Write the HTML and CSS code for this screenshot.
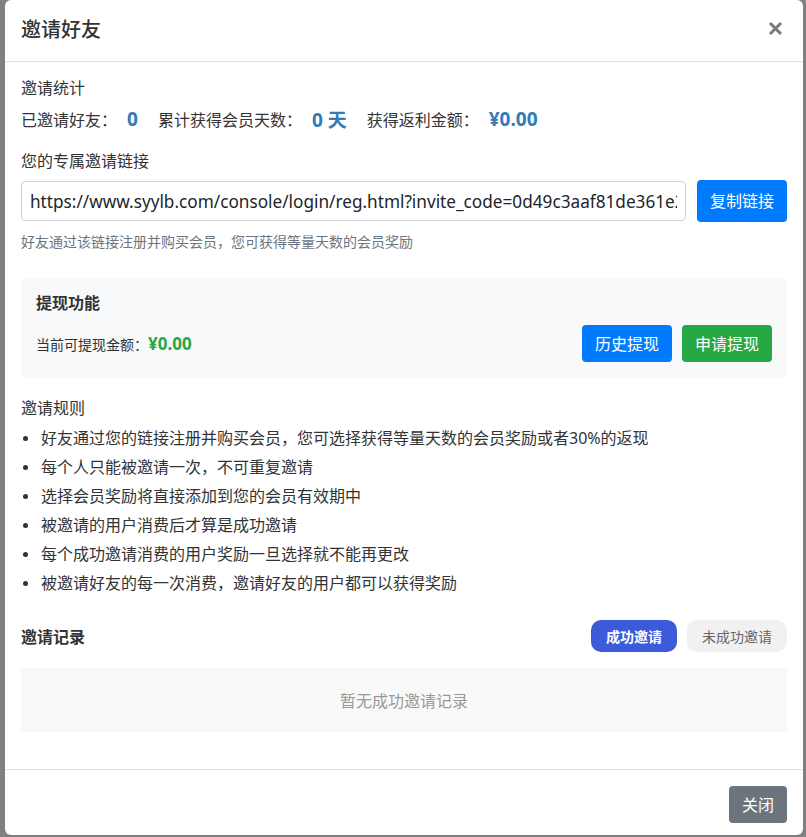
FILE: index.html
```html
<!DOCTYPE html>
<html lang="zh-CN">
<head>
<meta charset="utf-8">
<title>邀请好友</title>
<link rel="stylesheet" href="styles.css">
</head>
<body>
<div class="backdrop">
  <div class="modal">
    <div class="modal-header">
      <h5 class="modal-title">邀请好友</h5>
      <button class="close" type="button" aria-label="关闭">
        <svg width="15" height="15" viewBox="0 0 15 15"><path d="M2 2 L13 13 M13 2 L2 13" stroke="#7a7a7a" stroke-width="3" stroke-linecap="butt"/></svg>
      </button>
    </div>
    <div class="modal-body">
      <div class="sec-title">邀请统计</div>
      <div class="stat-row">
        <span class="stat"><span class="stat-label">已邀请好友：</span><strong class="stat-num">0</strong></span>
        <span class="stat"><span class="stat-label">累计获得会员天数：</span><strong class="stat-num">0 天</strong></span>
        <span class="stat"><span class="stat-label">获得返利金额：</span><strong class="stat-num">¥0.00</strong></span>
      </div>

      <div class="sec-title link-title">您的专属邀请链接</div>
      <div class="link-row">
        <input class="link-input" type="text" readonly value="https://www.syylb.com/console/login/reg.html?invite_code=0d49c3aaf81de361e2b7a9">
        <button class="btn btn-primary btn-copy" type="button">复制链接</button>
      </div>
      <div class="hint">好友通过该链接注册并购买会员，您可获得等量天数的会员奖励</div>

      <div class="withdraw">
        <div class="withdraw-title">提现功能</div>
        <div class="withdraw-row">
          <div class="withdraw-amount">当前可提现金额：<strong class="green-num">¥0.00</strong></div>
          <div class="withdraw-actions">
            <button class="btn btn-primary" type="button">历史提现</button>
            <button class="btn btn-success" type="button">申请提现</button>
          </div>
        </div>
      </div>

      <div class="sec-title rules-title">邀请规则</div>
      <ul class="rules">
        <li>好友通过您的链接注册并购买会员，您可选择获得等量天数的会员奖励或者30%的返现</li>
        <li>每个人只能被邀请一次，不可重复邀请</li>
        <li>选择会员奖励将直接添加到您的会员有效期中</li>
        <li>被邀请的用户消费后才算是成功邀请</li>
        <li>每个成功邀请消费的用户奖励一旦选择就不能再更改</li>
        <li>被邀请好友的每一次消费，邀请好友的用户都可以获得奖励</li>
      </ul>

      <div class="records-head">
        <div class="records-title">邀请记录</div>
        <div class="tabs">
          <button class="tab tab-active" type="button">成功邀请</button>
          <button class="tab" type="button">未成功邀请</button>
        </div>
      </div>
      <div class="empty">暂无成功邀请记录</div>
    </div>
    <div class="modal-footer">
      <button class="btn btn-secondary" type="button">关闭</button>
    </div>
  </div>
</div>
</body>
</html>
```

FILE: styles.css
```css
* { box-sizing: border-box; }

html, body {
  margin: 0;
  padding: 0;
  height: 837px;
  overflow: hidden;
}

body {
  background: #808080;
  font-family: "Noto Sans", "Noto Sans CJK SC", sans-serif;
  font-size: 16px;
  color: #212529;
}

.backdrop {
  height: 837px;
  padding-left: 5px;
}

.modal {
  width: 798px;
  height: 835px;
  background: #fff;
  border-radius: 6px;
  display: flex;
  flex-direction: column;
}

.modal-header {
  height: 62px;
  border-bottom: 1px solid #dee2e6;
  padding: 0 20px 1px 16px;
  display: flex;
  align-items: center;
  justify-content: space-between;
}

.modal-title {
  margin: 0;
  font-size: 20px;
  font-weight: 500;
  line-height: 24px;
  color: #333;
}

.close {
  border: 0;
  background: none;
  padding: 0;
  width: 15px;
  height: 15px;
  display: flex;
  margin-top: -4px;
}

.modal-body {
  flex: 1;
  padding: 16px 16px 0 16px;
}

.sec-title {
  line-height: 20px;
  font-size: 16px;
  color: #333;
}

.stat-row {
  margin-top: 7px;
  height: 28px;
  display: flex;
  align-items: center;
  color: #333;
}

.stat {
  display: flex;
  align-items: center;
  margin-right: 20px;
}

.stat-num {
  margin-left: 10px;
  font-size: 19px;
  font-weight: 700;
  color: #337ab7;
}

.link-title { margin-top: 18px; }

.link-row {
  margin-top: 9px;
  height: 42px;
  display: flex;
  align-items: center;
  gap: 11px;
}

.link-input {
  flex: 1;
  min-width: 0;
  height: 40px;
  border: 1px solid #ced4da;
  border-radius: 4px;
  padding: 0 8px;
  font-family: "Noto Sans", "Noto Sans CJK SC", sans-serif;
  font-size: 17.2px;
  color: #212529;
  background: #fff;
  outline: none;
}

.btn {
  border: 0;
  border-radius: 4px;
  height: 37px;
  padding: 0 13px;
  font-family: "Noto Sans", "Noto Sans CJK SC", sans-serif;
  font-size: 16px;
  color: #fff;
  line-height: 1;
  cursor: pointer;
}

.btn-copy {
  height: 42px;
}

.btn-primary { background: #007bff; }
.btn-success { background: #28a745; }
.btn-secondary { background: #6c757d; width: 58px; padding: 0; }

.hint {
  margin-top: 10px;
  line-height: 20px;
  font-size: 14px;
  color: #6c757d;
}

.withdraw {
  margin-top: 26px;
  background: #f8f9fa;
  border-radius: 5px;
  padding: 15px 15px 16px;
}

.withdraw-title {
  line-height: 20px;
  font-weight: 700;
  font-size: 16px;
  color: #333;
}

.withdraw-row {
  margin-top: 12px;
  display: flex;
  align-items: center;
  justify-content: space-between;
}

.withdraw-amount {
  font-size: 14px;
  color: #333;
  display: flex;
  align-items: center;
}

.green-num {
  color: #28a745;
  font-size: 17px;
  font-weight: 700;
}

.withdraw-actions {
  display: flex;
  gap: 10px;
}

.rules-title { margin-top: 20px; }

.rules {
  list-style: none;
  margin: 6px 0 0;
  padding: 0;
}

.rules li {
  line-height: 29px;
  color: #333;
  display: flex;
  align-items: center;
}

.rules li::before {
  content: "";
  width: 5px;
  height: 5px;
  border-radius: 50%;
  background: #333;
  margin: 0 13px 0 2px;
  flex: none;
}

.records-head {
  margin-top: 22px;
  height: 32px;
  display: flex;
  align-items: center;
  justify-content: space-between;
}

.records-title {
  font-weight: 700;
  color: #333;
}

.tabs {
  display: flex;
  gap: 10px;
}

.tab {
  height: 32px;
  border: 0;
  border-radius: 10px;
  padding: 0 15px;
  font-family: "Noto Sans", "Noto Sans CJK SC", sans-serif;
  font-size: 14px;
  background: #f1f1f1;
  color: #666;
  cursor: pointer;
}

.tab-active {
  background: #3b5bdb;
  color: #fff;
  font-weight: 700;
}

.empty {
  margin-top: 16px;
  height: 64px;
  background: #f9f9f9;
  border-radius: 4px;
  display: flex;
  align-items: center;
  justify-content: center;
  color: #999;
}

.modal-footer {
  border-top: 1px solid #dee2e6;
  padding: 16px 16px 12px;
  display: flex;
  justify-content: flex-end;
}
```
